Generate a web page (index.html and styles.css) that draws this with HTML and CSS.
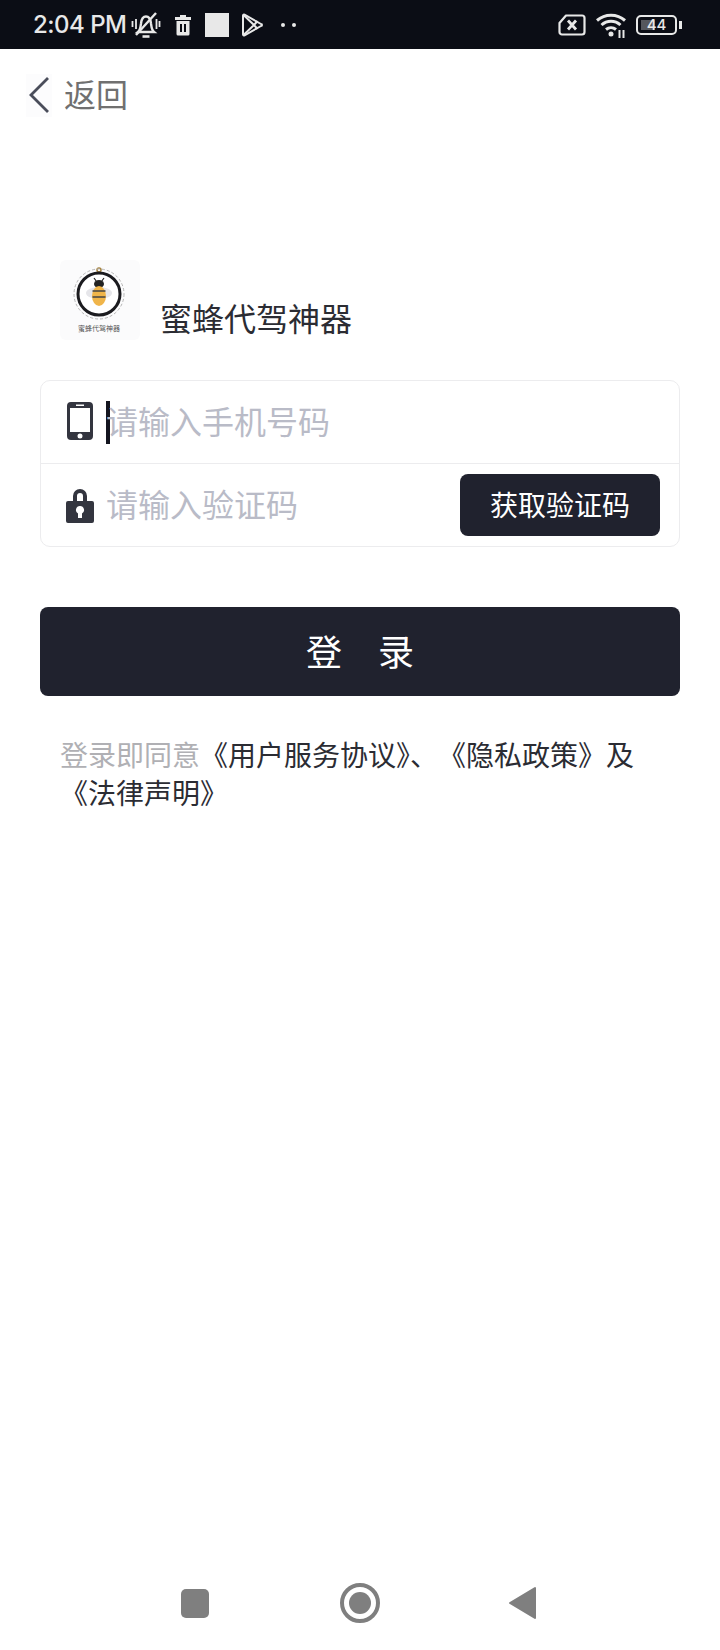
FILE: index.html
```html
<!DOCTYPE html>
<html lang="zh-CN">
  <head>
    <meta charset="UTF-8" />
    <meta name="viewport" content="width=device-width, initial-scale=1.0" />
    <title>登录</title>
    <link rel="stylesheet" href="styles.css">
  </head>
  <body>
    <div class="page">
      <div class="status-bar">
        <span class="time">2:04 PM</span>
        <svg class="st-icon" width="30" height="28" viewBox="0 0 30 28" fill="none" stroke="#e8e8e8" stroke-width="2.400">
          <path d="M7 21c2.500-2 2.500-5 3-8.500C10.500 8 12.500 5.500 15 5.500s4.500 2.500 5 7c.5 3.500.5 6.500 3 8.500z" />
          <path d="M11.500 25.500h7" stroke-width="2.600" />
          <path d="M25 2 5 24" />
          <path d="M1.500 10v6M5 8v10M25.500 8v10M28.500 10v6" stroke-width="1.800" />
        </svg>
        <svg class="st-icon st-trash" width="18" height="22" viewBox="0 0 18 22" fill="#e8e8e8">
          <path d="M6 1h6v2h5v3H1V3h5zM2.500 7h13v13a1.500 1.500 0 0 1-1.500 1.500H4A1.500 1.500 0 0 1 2.500 20zM6 10v8h2v-8zm4 0v8h2v-8z" />
        </svg>
        <span class="st-square"></span>
        <svg class="st-icon st-play" width="22" height="24" viewBox="0 0 22 24" fill="none" stroke="#e8e8e8" stroke-width="2" stroke-linejoin="round">
          <path d="M2 2.500v19a1 1 0 0 0 1.500.8L20 13a1 1 0 0 0 0-2L3.500 1.700A1 1 0 0 0 2 2.500z" />
          <path d="M2.500 2 13 12 2.500 22M13 12l3.500-4M13 12l3.500 4" />
        </svg>
        <span class="st-dots"><i></i><i></i></span>
        <span class="st-right">
          <svg width="28" height="22" viewBox="0 0 28 22" fill="none" stroke="#e8e8e8" stroke-width="2.200">
            <path d="M8 1.500h16a2.500 2.500 0 0 1 2.500 2.500v14a2.500 2.500 0 0 1-2.500 2.500H4A2.500 2.500 0 0 1 1.500 18V9z" stroke-linejoin="round" />
            <path d="m10 6.500 8 9m0-9-8 9" stroke-width="2.800" />
          </svg>
          <svg width="32" height="26" viewBox="0 0 32 26" fill="none" stroke="#e8e8e8" stroke-width="3">
            <path d="M2 8.500c8-7 20-7 28 0M6.500 13c5.500-5 13.500-5 19 0M11 17.500c3-2.500 7-2.500 10 0" />
            <circle cx="16" cy="22" r="2.500" fill="#e8e8e8" stroke="none" />
            <path d="M24.500 18v8M28.500 18v8" stroke-width="2" />
          </svg>
          <span class="battery">
            <span class="battery-body"><span class="battery-fill"></span><span class="battery-num">44</span></span>
            <span class="battery-tip"></span>
          </span>
        </span>
      </div>

      <div class="back-row">
        <span class="back-btn">
          <svg width="24" height="38" viewBox="0 0 24 38" fill="none" stroke="#4a4d5a" stroke-width="2.800">
            <path d="M21 2 4 19l17 17" />
          </svg>
        </span>
        <span class="back-text">返回</span>
      </div>

      <div class="brand">
        <div class="logo">
          <svg width="80" height="80" viewBox="0 0 80 80">
            <circle cx="39" cy="10" r="2" fill="none" stroke="#a5813c" stroke-width="1.500" />
            <circle cx="39" cy="34" r="25" fill="none" stroke="#b5b5b5" stroke-width="1" stroke-dasharray="3 2" />
            <circle cx="39" cy="34" r="21" fill="#fff" stroke="#1b1b1f" stroke-width="3" />
            <path d="M34 18l2.500 3.500M44 18l-2.500 3.500" stroke="#222" stroke-width="1.200" />
            <ellipse cx="39" cy="24" rx="5" ry="4" fill="#222" />
            <ellipse cx="39" cy="33" rx="13" ry="6" fill="#e6e6ea" />
            <ellipse cx="39" cy="36" rx="7" ry="10" fill="#f0b54a" />
            <path d="M32.500 31h13M32.500 37h13" stroke="#444" stroke-width="1.500" />
            <text x="39" y="71" class="logo-text">蜜蜂代驾神器</text>
          </svg>
        </div>
        <span class="brand-name">蜜蜂代驾神器</span>
      </div>

      <div class="form-card">
        <div class="form-row">
          <svg class="field-icon icon-phone" width="28" height="40" viewBox="0 0 28 40">
            <path fill="#33353f" fill-rule="evenodd" d="M5 1h18a4 4 0 0 1 4 4v30a4 4 0 0 1-4 4H5a4 4 0 0 1-4-4V5a4 4 0 0 1 4-4zM4 7v24h20V7zm6-3.500v1.500h8V3.500zM14 32.500a2.500 2.500 0 1 0 0 5 2.500 2.500 0 0 0 0-5z" />
          </svg>
          <span class="caret"></span>
          <span class="placeholder">请输入手机号码</span>
        </div>
        <div class="form-row">
          <svg class="field-icon" width="28" height="36" viewBox="0 0 28 36">
            <path fill="#33353f" fill-rule="evenodd" d="M7 14V9a7 7 0 0 1 14 0v5h5a2 2 0 0 1 2 2v18a2 2 0 0 1-2 2H2a2 2 0 0 1-2-2V16a2 2 0 0 1 2-2zm4 0h6V9a3 3 0 0 0-6 0zm3 5a4 4 0 0 0-2 7.500V31h4v-4.500A4 4 0 0 0 14 19z" />
          </svg>
          <span class="placeholder">请输入验证码</span>
          <button class="code-btn">获取验证码</button>
        </div>
      </div>

      <button class="login-btn">登　录</button>

      <p class="agreement"><span class="muted">登录即同意</span><span>《用户服务协议<span class="tight">》</span>、《隐私政策》及</span><br><span>《法律声明》</span></p>

      <div class="nav-bar">
        <span class="nav-square"></span>
        <span class="nav-circle"><i></i></span>
        <svg width="28" height="34" viewBox="0 0 28 34"><path fill="#7f7f7f" stroke="#7f7f7f" stroke-width="2" stroke-linejoin="round" d="M27 2v30L2 17z" /></svg>
      </div>
    </div>
  </body>
</html>
```

FILE: styles.css
```css
* {
  box-sizing: border-box;
}
body {
  margin: 0;
  padding: 0;
  background: #fff;
  font-family: "Noto Sans CJK SC", "Liberation Sans", sans-serif;
}
.page {
  width: 720px;
  height: 1650px;
  display: flex;
  flex-direction: column;
}

.status-bar {
  height: 49px;
  background: #0b0d15;
  display: flex;
  align-items: center;
  padding: 0 38px 0 33px;
  color: #e8e8e8;
}
.time {
  font-family: Inter, "Liberation Sans", sans-serif;
  font-size: 24px;
  font-weight: 500;
  letter-spacing: -0.5px;
}
.st-icon {
  margin-left: 4px;
}
.st-trash {
  margin-left: 13px;
}
.st-square {
  width: 24px;
  height: 24px;
  background: #e8e8e8;
  margin-left: 13px;
}
.st-play {
  margin-left: 12px;
}
.st-dots {
  display: flex;
  gap: 7px;
  margin-left: 18px;
}
.st-dots i {
  width: 4px;
  height: 4px;
  border-radius: 50%;
  background: #e8e8e8;
}
.st-right {
  margin-left: auto;
  display: flex;
  align-items: center;
  gap: 9px;
}
.battery {
  display: flex;
  align-items: center;
}
.battery-body {
  position: relative;
  width: 41px;
  height: 20px;
  border: 2px solid #e8e8e8;
  border-radius: 5px;
  display: flex;
  align-items: center;
  justify-content: center;
}
.battery-fill {
  position: absolute;
  left: 3px;
  top: 3px;
  bottom: 3px;
  width: 14px;
  background: #55575d;
}
.battery-num {
  position: relative;
  font-family: Inter, "Liberation Sans", sans-serif;
  font-size: 15px;
  font-weight: 500;
}
.battery-tip {
  width: 3px;
  height: 8px;
  margin-left: 2px;
  background: #e8e8e8;
}

.back-row {
  display: flex;
  align-items: center;
  height: 92px;
  padding-left: 26px;
}
.back-btn {
  width: 26px;
  height: 43px;
  background: #fcfcfd;
  display: flex;
  align-items: center;
  justify-content: center;
}
.back-btn svg {
  margin: -1px 1px 0 0;
}
.back-text {
  margin: 0 0 4px 12px;
  font-size: 32px;
  color: #707070;
}

.brand {
  display: flex;
  align-items: flex-end;
  margin: 119px 0 0 60px;
  height: 80px;
}
.logo {
  width: 80px;
  height: 80px;
  background: #fbfbfc;
  border-radius: 6px;
}
.logo-text {
  font-size: 7px;
  fill: #555;
  text-anchor: middle;
}
.brand-name {
  margin-left: 20px;
  margin-bottom: 1px;
  font-size: 32px;
  line-height: 44px;
  color: #2b2c33;
}

.form-card {
  width: 640px;
  height: 167px;
  margin: 40px 0 0 40px;
  border: 1px solid #ececee;
  border-radius: 10px;
}
.form-row {
  height: 83px;
  display: flex;
  align-items: center;
  padding: 0 19px 0 25px;
}
.form-row:first-child {
  height: 82px;
}
.form-row + .form-row {
  border-top: 1px solid #ececee;
}
.field-icon {
  flex: none;
}
.icon-phone {
  margin-bottom: 2px;
}
.caret {
  width: 4px;
  height: 43px;
  background: #14151f;
  margin: 0 -16px 0 12px;
}
.placeholder {
  margin: 0 0 4px 12px;
  font-size: 32px;
  color: #b9bbc7;
}
.code-btn {
  margin-left: auto;
  width: 200px;
  height: 62px;
  border: none;
  border-radius: 8px;
  padding: 0 0 3px;
  background: #20222e;
  color: #fff;
  font-family: inherit;
  font-size: 28px;
}

.login-btn {
  width: 640px;
  height: 89px;
  margin: 60px 0 0 40px;
  border: none;
  border-radius: 8px;
  padding: 0 0 4px;
  background: #20222e;
  color: #fff;
  font-family: inherit;
  font-size: 36px;
}

.agreement {
  margin: 39px 40px 0 60px;
  font-size: 28px;
  line-height: 38px;
  color: #2b2c33;
  text-spacing-trim: space-all;
}
.muted {
  color: #b0b0b4;
}
.tight {
  letter-spacing: -14px;
}

.nav-bar {
  margin-top: auto;
  height: 94px;
  display: flex;
  align-items: center;
  padding: 0 184px 0 181px;
  justify-content: space-between;
}
.nav-square {
  width: 28px;
  height: 29px;
  border-radius: 5px;
  background: #7f7f7f;
}
.nav-circle {
  width: 40px;
  height: 40px;
  margin-left: 3px;
  border: 4px solid #7f7f7f;
  border-radius: 50%;
  display: flex;
  align-items: center;
  justify-content: center;
}
.nav-circle i {
  width: 22px;
  height: 22px;
  border-radius: 50%;
  background: #7f7f7f;
}
```
